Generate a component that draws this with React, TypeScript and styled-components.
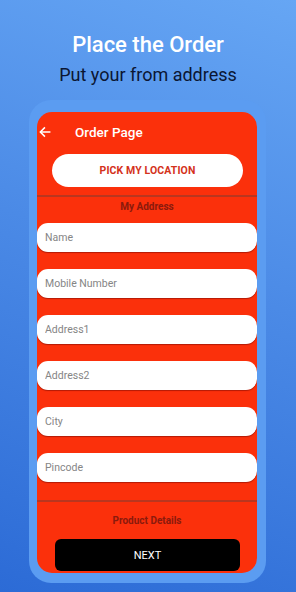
import styled, { createGlobalStyle } from 'styled-components';

const GlobalStyle = createGlobalStyle`
  html, body {
    margin: 0;
    padding: 0;
  }
  body {
    font-family: Roboto, "Liberation Sans", sans-serif;
  }
`;

const Page = styled.div`
  width: 296px;
  height: 592px;
  overflow: hidden;
  background: linear-gradient(200deg, #66a6f4 0%, #4b8ae6 45%, #2c6bd6 100%);
  display: flex;
  flex-direction: column;
  align-items: center;
`;

const Title = styled.h1`
  margin: 32px 0 0;
  font-size: 22px;
  line-height: 26px;
  font-weight: 500;
  color: #ffffff;
`;

const Subtitle = styled.p`
  margin: 6px 0 0;
  font-size: 18px;
  line-height: 22px;
  color: #0b1633;
`;

const Frame = styled.div`
  margin: 14px 0 0 -1px;
  width: 237px;
  padding: 12px 9px 10px 8px;
  background: #5b9cf1;
  border-radius: 22px;
  box-sizing: border-box;
`;

const Screen = styled.div`
  background: #fb300b;
  border-radius: 15px;
  overflow: hidden;
  display: flex;
  flex-direction: column;
  height: 461px;
`;

const Header = styled.div`
  height: 39px;
  display: flex;
  align-items: center;
  gap: 23px;
  padding-left: 1px;
`;

const HeaderTitle = styled.span`
  color: #ffffff;
  font-size: 13.5px;
  font-weight: 500;
`;

const PickButton = styled.button`
  margin: 3px 14px 0 15px;
  height: 33px;
  border: 0;
  border-radius: 17px;
  background: #ffffff;
  color: #d4321b;
  font-family: Roboto, "Liberation Sans", sans-serif;
  font-size: 10.5px;
  font-weight: 700;
  letter-spacing: 0.1px;
`;

const Divider = styled.div<{ $top: number }>`
  margin-top: ${p => p.$top}px;
  height: 2px;
  background: #b9361f;
`;

const SectionLabel = styled.div<{ $h: number; $pb?: number }>`
  height: ${p => p.$h}px;
  padding-bottom: ${p => p.$pb ?? 0}px;
  box-sizing: border-box;
  display: flex;
  align-items: center;
  justify-content: center;
  color: #8a1a0d;
  font-size: 10px;
  font-weight: 700;
`;

const Fields = styled.div`
  display: flex;
  flex-direction: column;
  gap: 17px;
`;

const Field = styled.input`
  height: 29px;
  border: 0;
  border-radius: 11px;
  background: #ffffff;
  box-shadow: 0 1px 1px rgba(90, 0, 0, 0.45);
  padding: 0 8px;
  font-family: Roboto, "Liberation Sans", sans-serif;
  font-size: 10.5px;
  outline: none;
  &::placeholder {
    color: #858585;
  }
`;

const NextButton = styled.button`
  margin: 0 17px 0 18px;
  height: 32px;
  border: 0;
  border-radius: 6px;
  background: #000000;
  color: #ffffff;
  font-family: Roboto, "Liberation Sans", sans-serif;
  font-size: 11px;
`;

const fields = ['Name', 'Mobile Number', 'Address1', 'Address2', 'City', 'Pincode'];

const App = () => {
  return (
    <Page>
      <GlobalStyle />
      <Title>Place the Order</Title>
      <Subtitle>Put your from address</Subtitle>
      <Frame>
        <Screen>
          <Header>
            <svg width="14" height="14" viewBox="0 0 24 24" fill="none" stroke="#ffffff" strokeWidth="2.6" strokeLinecap="square">
              <path d="M20 12H5" />
              <path d="M11 5l-7 7 7 7" />
            </svg>
            <HeaderTitle>Order Page</HeaderTitle>
          </Header>
          <PickButton>PICK MY LOCATION</PickButton>
          <Divider $top={8} />
          <SectionLabel $h={26} $pb={7}>My Address</SectionLabel>
          <Fields>
            {fields.map(f => (
              <Field key={f} placeholder={f} />
            ))}
          </Fields>
          <Divider $top={18} />
          <SectionLabel $h={37}>Product Details</SectionLabel>
          <NextButton>NEXT</NextButton>
        </Screen>
      </Frame>
    </Page>
  );
};

export default App;
